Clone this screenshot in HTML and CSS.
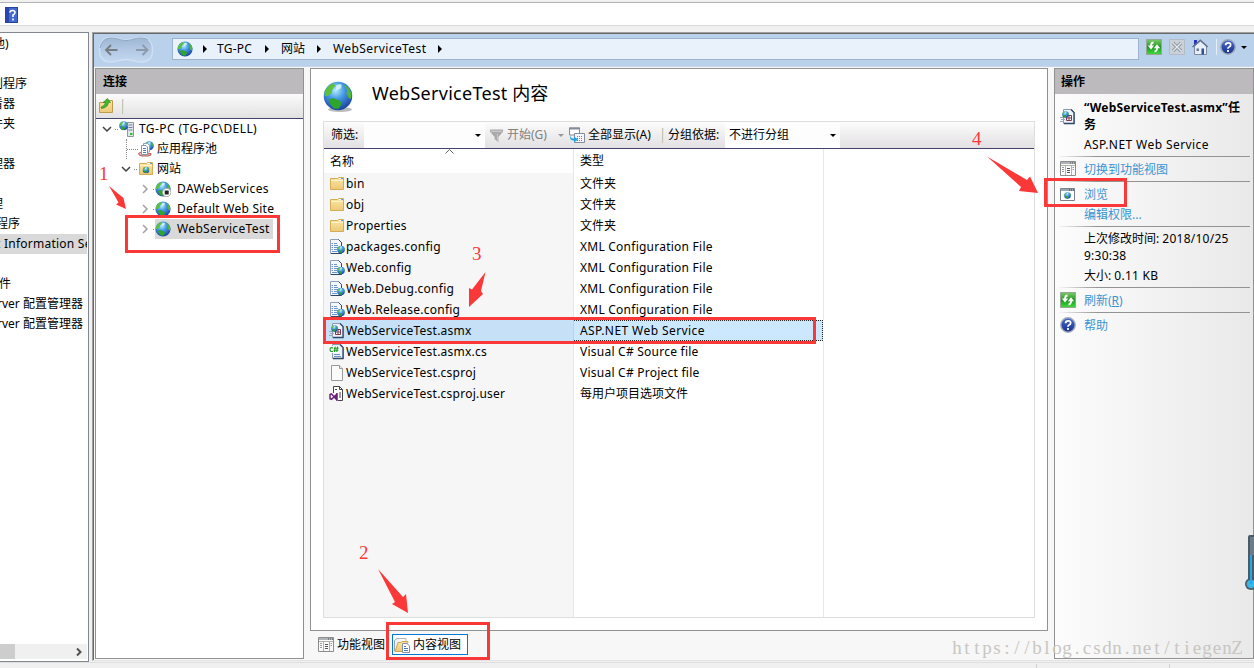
FILE: index.html
```
<!DOCTYPE html>
<html lang="zh-CN">
<head>
<meta charset="utf-8">
<title>IIS</title>
<link rel="stylesheet" href="styles.css">
</head>
<body>
<svg class="defs" aria-hidden="true">
  <defs>
    <radialGradient id="sea" cx=".42" cy=".3" r=".75"><stop offset="0" stop-color="#b4ecfd"/><stop offset=".4" stop-color="#479ae4"/><stop offset="1" stop-color="#17399a"/></radialGradient>
    <linearGradient id="gold" x2="0" y2="1"><stop offset="0" stop-color="#fbe6a2"/><stop offset="1" stop-color="#ecc977"/></linearGradient>
    <linearGradient id="lime" x2="0" y2="1"><stop offset="0" stop-color="#7ccb6a"/><stop offset=".5" stop-color="#1f9622"/><stop offset="1" stop-color="#3fdc3a"/></linearGradient>
    <linearGradient id="navy" x2="0" y2="1"><stop offset="0" stop-color="#4a6ccc"/><stop offset="1" stop-color="#17308c"/></linearGradient>
    <linearGradient id="pill" x2="0" y2="1"><stop offset="0" stop-color="#9fb6d3"/><stop offset=".5" stop-color="#b2c8e4"/><stop offset="1" stop-color="#c3d8f0"/></linearGradient>
    <symbol id="globe" viewBox="0 0 16 16">
      <circle cx="8" cy="8" r="7.6" fill="url(#sea)"/>
      <path d="M.8 6Q2 2.500 5.500 1L6.500 2.500 5 4.500 4.500 6.500 2.500 8 1 8Z" fill="#5cc03e"/>
      <path d="M3 9.800L5.500 9 8.800 10.400 10 12 8.400 14.800 5.800 14.600 4 12.500Z" fill="#2da62b"/>
      <path d="M11 1.800L13.600 3.400 15.200 6.500 15 9.500 13.600 9 12.600 6.600 13 4.800Z" fill="#4fb838"/>
      <path d="M7 2.400Q9 1.200 10 2L9.500 4 7 5Z" fill="#e4f9fd" opacity=".8"/>
    </symbol>
    <symbol id="folder" viewBox="0 0 16 16">
      <path d="M1.500 2.500H8.500L9.500 1.500H14.500V13.500H1.500Z" fill="url(#gold)" stroke="#d3ad55"/>
      <path d="M10 2.500H13" stroke="#fff"/><path d="M12 2.500H14" stroke="#5f9fdc"/><path d="M2 4.500H14" stroke="#fff3c9"/>
    </symbol>
    <symbol id="page" viewBox="0 0 16 16"><path d="M2.500.5H10.500L13.500 3.500V15.500H2.500Z" fill="#fbfbfb" stroke="#999"/><path d="M10.500.5V3.500H13.500" fill="#eee" stroke="#999"/></symbol>
    <symbol id="config" viewBox="0 0 16 16">
      <path d="M1.500.5H9.500L12.500 3.500V14.500H1.500Z" fill="#f4f8fd" stroke="#8ea0ba"/><path d="M9.500.5L12.500 3.500V14.500H2" fill="none" stroke="#2d4668"/>
      <path d="M2.500 4.500H4M5 4.500H8M2.500 6.500H4M5 6.500H9M2.500 8.500H4M5 8.500H9M2.500 10.500H4M5 10.500H8M3 12.500H8" stroke="#5b87d0" stroke-width=".9"/>
      <use href="#globe" x="8" y="6.500" width="8" height="8"/>
    </symbol>
    <symbol id="asmx" viewBox="0 0 16 16">
      <path d="M3.500.5H11L14.500 3.500V14.500H3.500Z" fill="#eef3fa" stroke="#8a9cb5"/><path d="M11 .5L14 3.500V14.500H4" fill="none" stroke="#2d4668" stroke-width="1.300"/>
      <path d="M6.500 6.500H11.500V11.500H6.500ZM9 6.500V11.500M6.500 9H11.500" fill="#fff" stroke="#7b3a4c"/>
      <use href="#globe" x="2" y="2" width="7" height="7"/>
      <path d="M0 8.500H3M1 10.500H5M0 12.500H4" stroke="#9aa7b9"/>
    </symbol>
    <symbol id="csharp" viewBox="0 0 16 16">
      <path d="M3.500.5H11L14.500 3.500V14.500H3.500Z" fill="#eef3fa" stroke="#8a9cb5"/><path d="M11 .5L14 3.500V14.500H4" fill="none" stroke="#2d4668" stroke-width="1.300"/>
      <path d="M5 10.500H11M5 12.500H12" stroke="#6a8fc4"/><path d="M0 2H9.500V9H0Z" fill="#fff" opacity=".9"/>
      <path d="M4 4Q1 2.800 1 5.500T4 7.200M6.200 2.500L5.400 8M8.600 2.500L7.800 8M4.800 4.300H9.600M4.500 6.300H9.300" fill="none" stroke="#169b1d" stroke-width="1.100"/>
    </symbol>
    <symbol id="vsuser" viewBox="0 0 16 16">
      <path d="M4.500 7V.5H10.500L13.500 3.500V14.500H9" fill="#fff" stroke="#444"/><path d="M10.500.5V3.500H13.500M11 6V12M8 3.500H6" stroke="#444" fill="none"/>
      <path d="M1 8.500L2.500 7.800 7.300 13.300V8.800L2.500 13.400 1 12.700Z" fill="none" stroke="#68217a" stroke-width="1.500"/><path d="M8 7V14.700" stroke="#68217a" stroke-width="1.500"/>
    </symbol>
    <symbol id="server" viewBox="0 0 16 16">
      <path d="M8.500 1.500H14.500V15.500H8.500Z" fill="#dfe5ea" stroke="#8d979f"/><path d="M9.500 4H13.500M9.500 6.500H13.500M9.500 9H13.500" stroke="#7b858d"/><path d="M11 13H13.500" stroke="#37c132" stroke-width="2"/>
      <use href="#globe" x="0" y="0" width="9.500" height="9.500"/>
    </symbol>
    <symbol id="pool" viewBox="0 0 16 16">
      <path d="M.5 12.500Q2 10.500 5 12T13 12.500Q14 14.500 10 15H4Q1 15 .5 12.500Z" fill="#e3bcb5" stroke="#b25a50"/>
      <use href="#globe" x="6.500" y="0" width="9.500" height="9.500"/>
      <path d="M5.500 2.500H9.500L11.500 4.500V11H5.500Z" fill="#fff" stroke="#91a4bd"/><path d="M3.500 4.500H8L9.500 6V13.500H3.500Z" fill="#fff" stroke="#7f95b2"/>
      <path d="M5 7.500H8M5 9.500H8M5 11.500H8" stroke="#4c7ec5"/>
    </symbol>
    <symbol id="sites" viewBox="0 0 16 16"><use href="#folder" width="16" height="16"/><use href="#globe" x="4.500" y="5.500" width="7" height="7"/></symbol>
    <symbol id="stopped" viewBox="0 0 16 16"><use href="#globe" width="16" height="16"/><circle cx="11.700" cy="11.500" r="4.200" fill="#fff" stroke="#999" stroke-width=".8"/><path d="M9.700 9.500H13.700V13.500H9.700Z" fill="#222"/></symbol>
    <symbol id="connect" viewBox="0 0 16 16"><path d="M1.500 4.500H8L9 2.500H14.500V14.500H1.500Z" fill="url(#gold)" stroke="#c19c48"/><path d="M3 9Q7 8 7.500 4.500H5L9.500.5 12.500 4.500H10.500Q10 9.500 3.500 10.500Z" fill="#43b72d" stroke="#2b7f1f" stroke-width=".6"/></symbol>
    <symbol id="refresh" viewBox="0 0 16 16"><path d="M.5.5H15.500V15.500H.5Z" fill="url(#lime)" stroke="#93a893"/><path d="M7.500 3.500Q5 3.500 5 7M8.500 12.500Q11 12.500 11 9" fill="none" stroke="#fff" stroke-width="1.800"/><path d="M1.800 6.500H8.200L5 10.500ZM7.800 9.300H14.200L11 5.300Z" fill="#fff"/></symbol>
    <symbol id="stop" viewBox="0 0 16 16"><path d="M.5.5H15.500V15.500H.5Z" fill="#cbd1d8" stroke="#b3bcc6"/><path d="M4 4L12 12M12 4L4 12" stroke="#8f98a2" stroke-width="3.200"/><path d="M4 4L12 12M12 4L4 12" stroke="#e5e9ee" stroke-width="1.300"/></symbol>
    <symbol id="home" viewBox="0 0 16 16"><path d="M2.500 7L8.500 2 14.500 7V15.500H2.500Z" fill="#e8eef5" stroke="#7b8aa0"/><path d="M2 1H5V5L2 7Z" fill="#2436bd"/><path d="M.5 8L8.300 1.200 15.600 8" fill="none" stroke="#62728a" stroke-width="1.500"/><path d="M9.500 9.500H12V15.500H9.500Z" fill="#334f91"/><path d="M4.500 9.500H7V12H4.500Z" fill="#697990"/></symbol>
    <symbol id="help" viewBox="0 0 16 16"><circle cx="8" cy="8" r="7.200" fill="url(#navy)" stroke="#a0a9bb" stroke-width="1.400"/><path d="M5.600 6.200Q5.600 3.800 8.200 3.800T10.600 6Q10.600 7.300 9 8 8 8.400 8 9.800M8 11V13" fill="none" stroke="#fff" stroke-width="1.800"/></symbol>
    <symbol id="features" viewBox="0 0 16 16"><path d="M.5.5H15.500V14.500H.5Z" fill="#fafafa" stroke="#8c8c8c"/><path d="M1 2H15" stroke="#aeb4ba" stroke-width="2"/><path d="M1 4.500H15M5.500 5V14M11.500 5V14" stroke="#b0b0a8"/><path d="M2 6.500H4M2 8.500H4M2 10.500H4M12.500 6.500H14M12.500 8.500H14" stroke="#999"/><path d="M7 7.500H10M7 9.500H10M7 11.500H10" stroke="#555"/><path d="M10 2H11M12 2H13M14 2H15" stroke="#555"/></symbol>
    <symbol id="browse" viewBox="0 0 16 16"><path d="M.5 2.500H14.500V14.500H.5Z" fill="#fff" stroke="#7a8187"/><path d="M1 4H14" stroke="#97a6b4" stroke-width="2"/><path d="M9 4H10M11 4H12M13 4H14" stroke="#334"/><use href="#globe" x="4" y="6" width="7" height="7"/></symbol>
    <symbol id="content" viewBox="0 0 16 16"><path d="M.5 14V3.500L3 1.500H9L10 3" fill="#eff3f6" stroke="#9aa4aa"/><path d="M4.500 1.500H12V7" fill="#fff" stroke="#b3b7ba"/><path d="M1 14.500L4 5.500H7L8 4.500H14L12 14.500Z" fill="url(#gold)" stroke="#cba650"/><path d="M8.500 6.500H13L15.500 9V15.500H8.500Z" fill="#fff" stroke="#8490a0"/><path d="M10 9.500H12M10 11.500H14M10 13.500H14" stroke="#4778bd"/></symbol>
    <symbol id="funnel" viewBox="0 0 16 16"><path d="M1 1.500H15V4L10 9.500V15L6 12V9.500L1 4Z" fill="#aaa"/><path d="M2 3.500H14" stroke="#d5d5d5"/><path d="M9 6V13" stroke="#c8c8c8"/></symbol>
    <symbol id="showall" viewBox="0 0 16 16"><path d="M.5 1H10.500V8H.5Z" fill="#fff" stroke="#858b99"/><path d="M0 1.500H11" stroke="#858b99" stroke-width="2"/><path d="M5.500 6.500H15.500V15.500H5.500Z" fill="#f4f6fb" stroke="#858b99"/><path d="M8 9.500H14M8 11.500H14M8 13.500H14" stroke="#6d7ebf" stroke-dasharray="1 1"/><path d="M1 8Q1.500 12 5 11.500V9.200L9 12.500 5 15.500V13.500Q0 13.500 1 8Z" fill="#27a2dc"/></symbol>
    <symbol id="opened" viewBox="0 0 10 10"><path d="M1 3L5 7 9 3" fill="none" stroke="#404040" stroke-width="1.500"/></symbol>
    <symbol id="closed" viewBox="0 0 10 10"><path d="M3 1L7 5 3 9" fill="none" stroke="#a2a2a2" stroke-width="1.500"/></symbol>
  </defs>
</svg>

<div class="window">
  <header class="menubar"><svg class="menu-help" viewBox="0 0 13 16"><path d="M0 0H13V16H0Z" fill="#4468cc"/><path d="M0 0H4V16H0Z" fill="#2846ac"/><path d="M.5.5H12.500V15.500H.5Z" fill="none" stroke="#2743a0"/><path d="M5 5.500Q5 3.500 7.500 3.500T10 5.500Q10 7 8 8V10M8 11.500V13.500" fill="none" stroke="#fff" stroke-width="1.600"/></svg></header>
  <main class="workspace">
    <nav class="console">
      <div class="console-list">
        <div class="c-row c-pool">池)</div><div class="c-row"></div>
        <div class="c-row c-far">划程序</div><div class="c-row c-far">看器</div><div class="c-row c-far">件夹</div><div class="c-row"></div>
        <div class="c-row c-far">理器</div><div class="c-row"></div>
        <div class="c-row c-far">理</div><div class="c-row c-mid">程序</div>
        <div class="c-row c-mid c-on la">t Information Services</div><div class="c-row"></div>
        <div class="c-row c-one">件</div><div class="c-row c-near">rver 配置管理器</div><div class="c-row c-near">rver 配置管理器</div>
      </div>
      <div class="scroll"><span class="thumb"></span><svg class="scroll-arrow" viewBox="0 0 8 8"><path d="M2 0.500L5.500 4 2 7.500" fill="none" stroke="#505050" stroke-width="2"/></svg></div>
    </nav>
    <section class="iis">
      <div class="address">
        <svg class="travel" viewBox="0 0 56 28"><path d="M13 1.500C20 1.500 22 4 28 4S36 1.500 43 1.500C51 1.500 54.500 7 54.500 14S51 26 43 26C36 26 34 23.500 28 23.500S20 26 13 26C5 26 1.500 21 1.500 14S5 1.500 13 1.500Z" fill="url(#pill)" stroke="#cfe0f4" stroke-width="1.400"/><path d="M2 12Q4 2 13 2C20 2 22 4.500 28 4.500S36 2 43 2Q48 2 50 4" fill="none" stroke="#8ea5c4"/><path d="M19.500 14H8.500M13 9L8 14 13 19" fill="none" stroke="#777d83" stroke-width="1.900"/><path d="M38 14H49M44.500 9L49.500 14 44.500 19" fill="none" stroke="#8d9aa9" stroke-width="1.900"/></svg>
        <div class="crumbs la"><svg class="i16"><use href="#globe"/></svg><i class="tri"></i><span class="cr-host">TG-PC</span><i class="tri"></i><span class="cr-sites">网站</span><i class="tri"></i><span class="cr-name">WebServiceTest</span><i class="tri"></i></div>
        <div class="tools"><svg class="i16"><use href="#refresh"/></svg><svg class="i16"><use href="#stop"/></svg><svg class="i16"><use href="#home"/></svg><i class="tool-sep"></i><svg class="i16"><use href="#help"/></svg><i class="drop"></i></div>
      </div>
      <div class="columns">
        <section class="connections">
          <h2>连接</h2>
          <div class="conn-bar"><svg class="i16"><use href="#connect"/></svg><i class="bar-sep"></i></div>
          <div class="tree">
            <div class="node lv0"><svg class="i10"><use href="#opened"/></svg><i class="dots"></i><svg class="i16"><use href="#server"/></svg><span class="wide">TG-PC (TG-PC\DELL)</span></div>
            <div class="node lv1 leaf"><i class="dots"></i><svg class="i16"><use href="#pool"/></svg><span>应用程序池</span></div>
            <div class="node lv1"><svg class="i10"><use href="#opened"/></svg><i class="dots"></i><svg class="i16"><use href="#sites"/></svg><span>网站</span></div>
            <div class="node lv2"><svg class="i10"><use href="#closed"/></svg><i class="dots"></i><svg class="i16"><use href="#stopped"/></svg><span class="wide">DAWebServices</span></div>
            <div class="node lv2"><svg class="i10"><use href="#closed"/></svg><i class="dots"></i><svg class="i16"><use href="#globe"/></svg><span class="la">Default Web Site</span></div>
            <div class="node lv2 picked"><svg class="i10"><use href="#closed"/></svg><i class="dots"></i><svg class="i16"><use href="#globe"/></svg><span class="la">WebServiceTest</span></div>
          </div>
        </section>
        <section class="center">
          <div class="panel">
            <div class="title"><svg class="i31"><ellipse cx="17" cy="28.500" rx="12" ry="2.500" fill="#bbb"/><use href="#globe" width="30" height="30"/></svg><h1><span>WebServiceTest</span> 内容</h1></div>
            <div class="grid">
              <div class="filter">
                <span class="f-label">筛选:</span><span class="combo f-combo"><i class="drop"></i></span>
                <svg class="i15 f-funnel"><use href="#funnel"/></svg><span class="off">开始(G)</span><i class="drop pale"></i>
                <svg class="i16 f-show"><use href="#showall"/></svg><span class="f-all">全部显示(A)</span><i class="bar-sep"></i><span class="f-group">分组依据:</span>
                <span class="combo g-combo">不进行分组<i class="drop"></i></span>
              </div>
              <div class="table">
                <div class="tr th"><span class="name">名称<svg class="sort" viewBox="0 0 9 5"><path d="M.5 4.500L4.500.500 8.500 4.500" fill="none" stroke="#666"/></svg></span><span class="type">类型</span></div>
                <div class="tr"><span class="name la"><svg class="i16"><use href="#folder"/></svg>bin</span><span class="type">文件夹</span></div>
                <div class="tr"><span class="name la"><svg class="i16"><use href="#folder"/></svg>obj</span><span class="type">文件夹</span></div>
                <div class="tr"><span class="name la"><svg class="i16"><use href="#folder"/></svg>Properties</span><span class="type">文件夹</span></div>
                <div class="tr"><span class="name la"><svg class="i16"><use href="#config"/></svg>packages.config</span><span class="type la">XML Configuration File</span></div>
                <div class="tr"><span class="name la"><svg class="i16"><use href="#config"/></svg>Web.config</span><span class="type la">XML Configuration File</span></div>
                <div class="tr"><span class="name la"><svg class="i16"><use href="#config"/></svg>Web.Debug.config</span><span class="type la">XML Configuration File</span></div>
                <div class="tr"><span class="name la"><svg class="i16"><use href="#config"/></svg>Web.Release.config</span><span class="type la">XML Configuration File</span></div>
                <div class="tr chosen"><span class="name la"><svg class="i16"><use href="#asmx"/></svg>WebServiceTest.asmx</span><span class="type wide">ASP.NET Web Service</span></div>
                <div class="tr"><span class="name la"><svg class="i16"><use href="#csharp"/></svg>WebServiceTest.asmx.cs</span><span class="type la">Visual C# Source file</span></div>
                <div class="tr"><span class="name la"><svg class="i16"><use href="#page"/></svg>WebServiceTest.csproj</span><span class="type la">Visual C# Project file</span></div>
                <div class="tr"><span class="name la"><svg class="i16"><use href="#vsuser"/></svg>WebServiceTest.csproj.user</span><span class="type">每用户项目选项文件</span></div>
                <div class="tr filler"><span class="name"></span><span class="type"></span></div>
              </div>
            </div>
          </div>
          <div class="views"><span class="view"><svg class="i16"><use href="#features"/></svg>功能视图</span><span class="view view-on"><svg class="i16"><use href="#content"/></svg>内容视图</span></div>
        </section>
        <aside class="actions">
          <h2>操作</h2>
          <div class="act-body">
            <div class="act a-title"><svg class="i16"><use href="#asmx"/></svg><b><span>“WebServiceTest.asmx”</span>任<br>务</b></div>
            <div class="act a-kind wide">ASP.NET Web Service</div>
            <hr>
            <div class="act a-line link"><svg class="i16"><use href="#features"/></svg>切换到功能视图</div>
            <hr>
            <div class="act a-browse link"><svg class="i16"><use href="#browse"/></svg>浏览</div>
            <div class="act a-perm link">编辑权限...</div>
            <hr>
            <div class="act a-time">上次修改时间: <span class="la">2018/10/25<br>9:30:38</span></div>
            <div class="act a-size">大小: <span class="la">0.11 KB</span></div>
            <hr>
            <div class="act a-line link"><svg class="i16"><use href="#refresh"/></svg>刷新(<u>R</u>)</div>
            <hr>
            <div class="act a-line link"><svg class="i16"><use href="#help"/></svg>帮助</div>
          </div>
        </aside>
      </div>
    </section>
  </main>
  <footer class="status"><i></i><i></i></footer>
</div>

<svg class="overlay" viewBox="0 0 1254 668">
  <g fill="none" stroke="#fb3838" stroke-width="3">
    <path d="M126.500 216.500H278.500V251.500H126.500Z"/><path d="M387.500 623.500H488.500V658.500H387.500Z"/><path d="M324.500 318.500H814.500V342.500H324.500Z"/><path d="M1045.500 179.500H1125.500V205.500H1045.500Z"/>
  </g>
  <g fill="#fb3838">
    <path d="M109 186L123.500 198 126 209 116 204.500 118.500 202.500Z"/>
    <path d="M378 569L403 597 406 594 408 613 392 604 395 602Z"/>
    <path d="M485.500 272L481 291 483 294 469 307 469 288 472 289.500Z"/>
    <path d="M987 156.500L1027 180 1030 176.500 1038 193 1019 191 1021 187Z"/>
  </g>
  <g class="digit"><text x="99" y="180">1</text><text x="359" y="559">2</text><text x="472" y="260">3</text><text x="972" y="145">4</text></g>
  <g>
    <path d="M1248 537Q1248 535 1250 535H1254V589H1248Z" fill="#4a5a68"/><path d="M1250 537H1254V555H1250Z" fill="#6c7c88"/><circle cx="1251" cy="584" r="6" fill="#4b5965"/><circle cx="1251" cy="584" r="4.300" fill="#37b7e8"/><path d="M1250 555H1252V584H1250Z" fill="#25a8e2"/>
  </g>
  <text class="mark" y="654" x="957 967 977 987 997 1007 1017 1027 1037 1047 1057 1067 1077 1087 1097 1107 1117 1127 1137 1147 1157 1167 1177 1187 1197 1207 1217 1227 1237">https://blog.csdn.net/tiegenZ</text>
</svg>
</body>
</html>
```
FILE: styles.css
```
* { box-sizing: border-box; }
html, body { margin: 0; height: 668px; overflow: hidden; }
body { position: relative; background: #f0f0f0; color: #000; font: 12px/20px "Noto Sans", "Noto Sans CJK SC", sans-serif; }
i { font-style: normal; display: block; flex: none; }
svg { display: block; flex: none; }
h1, h2 { margin: 0; font-size: 12px; }
.defs { position: absolute; width: 0; height: 0; }
.i16 { width: 16px; height: 16px; }
.i15 { width: 15px; height: 15px; }
.i10 { width: 10px; height: 10px; }
.i31 { width: 32px; height: 32px; }
.la { letter-spacing: .24px; }
.wide { letter-spacing: .42px; }

.window { display: flex; flex-direction: column; width: 1254px; height: 668px; }
.menubar { height: 24px; margin: 2px 0 6px; padding: 4px 0 0 5px; background: #fff; border-top: 1px solid #b4b4b4; border-bottom: 1px solid #d9d9d9; }
.menu-help { width: 13px; height: 16px; }
.workspace { display: flex; height: 630px; }

.console { display: flex; flex: none; flex-direction: column; width: 89px; margin-right: 3px; background: #fff; border: solid #828790; border-width: 1px 1px 1px 0; overflow: hidden; }
.console-list { flex: 1; width: 87px; padding-top: 1px; overflow: hidden; white-space: nowrap; }
.c-row { height: 20px; }
.c-pool { text-indent: -7px; }
.c-far { text-indent: -9px; }
.c-mid { text-indent: -4px; }
.c-near { text-indent: -3px; }
.c-one { text-indent: -1px; }
.c-on { background: #d9d9d9; }
.scroll { display: flex; justify-content: space-between; align-items: center; width: 87px; height: 15px; margin-bottom: 2px; padding-right: 4px; background: #f0f0f0; }
.thumb { width: 15px; height: 15px; background: #cdcdcd; }
.scroll-arrow { width: 8px; height: 8px; }

.iis { display: flex; flex-direction: column; flex: 1; min-width: 0; height: 629px; background: #f7f7f7; border-top: 1px solid #a0a0a0; border-left: 1px solid #a0a0a0; border-bottom: 1px solid #e3e3e3; box-shadow: inset 1px 1px #696969; padding: 1px 0 0 1px; }
.address { display: flex; align-items: flex-start; height: 33px; padding: 2px 0 0 4px; background: #b9d1ea; border-bottom: 1px solid #c6d5e7; }
.travel { width: 56px; height: 28px; }
.crumbs { display: flex; flex: none; align-items: center; width: 967px; height: 22px; margin: 2px 0 0 18px; padding-left: 4px; background: #e9f2fb; border: 1px solid #9eb4cc; }
.tri { width: 0; height: 0; border: 4px solid transparent; border-left-color: #000; border-right: 0; margin-left: 10px; }
.cr-host { width: 38px; margin-left: 10px; }
.cr-sites { width: 26px; margin-left: 12px; letter-spacing: 0; }
.cr-name { width: 95px; margin-left: 12px; letter-spacing: .4px; }
.tools { display: flex; align-items: center; gap: 7px; height: 18px; margin: 2px 0 0 7px; }
.tool-sep { width: 1px; height: 16px; margin-left: 1px; margin-right: -4px; background: #e6eef8; }
.drop { width: 0; height: 0; border: 3px solid transparent; border-top-color: #000; border-bottom: 0; }
.tools .drop { margin-left: -2px; }

.columns { display: flex; flex: 1; align-items: flex-start; padding: 1px 0 0; }
h2 { height: 25px; padding-left: 8px; line-height: 26px; background: #bcbabd; }
.connections { flex: none; width: 209px; height: 591px; margin-left: 1px; background: #fff; border: 1px solid #919191; }
.connections h2 { padding-left: 7px; }
.conn-bar { display: flex; align-items: center; height: 25px; padding-left: 2px; background: linear-gradient(#fbfbfb, #e2e1e2); border-bottom: 1px solid #44436c; }
.bar-sep { width: 2px; height: 15px; margin-left: 8px; background: #c4c3b5; border-right: 1px solid #e6e6df; }
.node { display: flex; align-items: center; height: 20px; white-space: nowrap; }
.lv0 { padding-left: 6px; }
.lv1 { padding-left: 25px; }
.lv2 { padding-left: 44px; }
.dots { width: 4px; height: 1px; margin: 0 0 0 3px; background: repeating-linear-gradient(90deg, #888 0 1px, transparent 1px 2px); }
.node > span { margin-left: 1px; padding: 0 3px; }
.lv1 > span { margin-left: 0; }
.leaf .dots { width: 12px; height: 20px; margin: 0 0 0 5px; border-left: 1px dotted #888; background: repeating-linear-gradient(90deg, #888 0 1px, transparent 1px 2px) 0 10px / 100% 1px no-repeat; }
.lv2 .dots { width: 2px; }
.lv2 > span { margin-left: 3px; }
.picked > span { background: #d9d9d9; box-shadow: -19px 0 #d9d9d9; letter-spacing: .35px; }
.picked > svg { position: relative; }

.center { flex: none; width: 738px; margin-left: 6px; }
.panel { height: 563px; padding: 12px 12px 0; background: #fff; border: 1px solid #919191; }
.title { display: flex; height: 40px; }
h1 { margin: -1px 0 0 17px; font-size: 18px; line-height: 26px; font-weight: 400; white-space: nowrap; }
h1 span { letter-spacing: .28px; }
.grid { display: flex; flex-direction: column; width: 712px; height: 497px; border: 1px solid #dedede; }
.filter { display: flex; align-items: center; height: 27px; padding-left: 7px; background: linear-gradient(#fcfcfc, #e2e0e2); border-bottom: 1px solid #44436c; white-space: nowrap; }
.f-label { width: 33px; }
.combo { display: flex; align-items: center; justify-content: flex-end; height: 25px; padding-right: 4px; background: #fdfdfd; }
.f-combo { width: 121px; }
.f-funnel { margin-left: 4px; }
.off { width: 51px; margin-left: 3px; color: #808080; }
.pale { border-top-color: #999; margin-left: 0; }
.f-show { margin-left: 5px; }
.f-all { width: 65px; margin-left: 3px; }
.filter .bar-sep { margin-left: 9px; }
.f-group { width: 53px; margin-left: 4px; }
.g-combo { width: 115px; margin-left: 4px; padding-left: 4px; justify-content: space-between; }
.table { display: flex; flex-direction: column; flex: 1; }
.tr { display: flex; height: 21px; flex: none; line-height: 21px; white-space: nowrap; }
.name { position: relative; display: flex; align-items: center; gap: 1px; width: 250px; padding-left: 5px; background: #f6f6f6; border-right: 1px solid #e1e8ee; }
.type { width: 250px; padding-left: 6px; border-right: 1px solid #e1e8ee; }
.th { height: 24px; line-height: 23px; }
.th .name { padding-left: 6px; background: #fff; }
.sort { position: absolute; left: 121px; top: 0; width: 9px; height: 5px; }
.filler { flex: 1; }
.chosen { width: 499px; background: #cce8ff; outline: 1px dotted #222; outline-offset: -1px; }
.chosen .name { background: #c5e0f7; border-color: #aed5f3; }
.chosen .type { width: 249px; border-color: transparent; }
.views { display: flex; height: 28px; padding: 3px 0 0 8px; }
.view { display: flex; align-items: center; gap: 3px; height: 21px; white-space: nowrap; }
.view-on { width: 76px; margin-left: 7px; padding-left: 1px; background: #fff; border: 1px solid #0078d7; }

.actions { flex: none; width: 200px; height: 591px; margin-left: 6px; border: 1px solid #919191; background: linear-gradient(90deg, #fcfcfc, #e9e9e9); }
.actions h2 { padding-left: 6px; }
.act-body { padding: 4px 3px 0 2px; }
.act { position: relative; display: block; padding-left: 27px; white-space: nowrap; }
.act > svg { position: absolute; left: 3px; top: 50%; margin-top: -8px; }
hr { height: 1px; margin: 0; border: 0; background: linear-gradient(90deg, transparent, #939393 40px); }
.a-title { height: 36px; line-height: 17px; padding-top: 1px; }
.a-title > svg { margin-top: -7px; }
.a-title span { letter-spacing: .2px; }
.a-kind { height: 22px; line-height: 22px; }
.a-line { height: 24px; line-height: 25px; }
.a-browse { height: 24px; line-height: 26px; }
.a-perm { height: 20px; line-height: 17px; }
.a-time { height: 37px; padding-top: 3px; line-height: 17px; }
.a-size { height: 23px; line-height: 23px; }
.link { color: #3b94d1; }

.status { display: flex; height: 6px; border-top: 1px solid #dfdfdf; padding-top: 1px; }
.status i { width: 1px; height: 4px; background: #d0d0d0; margin-left: 1036px; }
.status i + i { margin-left: 132px; }

.overlay { position: absolute; left: 0; top: 0; width: 1254px; height: 668px; pointer-events: none; }
.digit { fill: #fb3838; font: 19px "Liberation Serif", serif; }
.mark { fill: #c7c6c2; font: 19px "Liberation Serif", serif; text-anchor: middle; }
```
